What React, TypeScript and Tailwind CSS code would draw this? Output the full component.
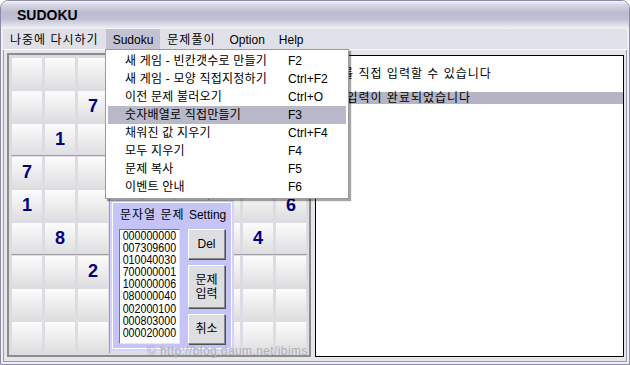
import React from 'react';

const givens: Record<string, string> = {
  '1-2': '7',
  '2-1': '1',
  '3-0': '7',
  '4-0': '1',
  '4-8': '6',
  '5-1': '8',
  '5-7': '4',
  '6-2': '2',
};

const menuBar = [
  { label: '나중에 다시하기', ko: true },
  { label: 'Sudoku', active: true },
  { label: '문제풀이', ko: true },
  { label: 'Option' },
  { label: 'Help' },
];

const sudokuMenu = [
  { label: '새 게임 - 빈칸갯수로 만들기', key: 'F2' },
  { label: '새 게임 - 모양 직접지정하기', key: 'Ctrl+F2' },
  { label: '이전 문제 불러오기', key: 'Ctrl+O' },
  { label: '숫자배열로 직접만들기', key: 'F3', active: true },
  { label: '채워진 값 지우기', key: 'Ctrl+F4' },
  { label: '모두 지우기', key: 'F4' },
  { label: '문제 복사', key: 'F5' },
  { label: '이벤트 안내', key: 'F6' },
];

const puzzleRows = [
  '000000000',
  '007309600',
  '010040030',
  '700000001',
  '100000006',
  '080000040',
  '002000100',
  '000803000',
  '000020000',
];

function Board() {
  return (
    <div className="w-[304px] h-[304px] shrink-0 border-2 border-[#8c8c8c] bg-[#dcdce2] p-[2px]">
      <div className="grid grid-cols-3 gap-px bg-[#9e9ea4]">
        {[0, 1, 2].flatMap((br) =>
          [0, 1, 2].map((bc) => (
            <div key={`b${br}${bc}`} className="grid grid-cols-3 gap-[3px] bg-[#dcdce2] p-px">
              {[0, 1, 2].flatMap((r) =>
                [0, 1, 2].map((c) => {
                  const row = br * 3 + r;
                  const col = bc * 3 + c;
                  const v = givens[`${row}-${col}`];
                  return (
                    <div
                      key={`c${row}${col}`}
                      className="w-[30px] h-[30px] flex items-center justify-center bg-linear-to-b from-[#fcfcfc] to-[#dfdfe1] text-[18px] leading-none font-bold text-[#000080]"
                    >
                      {v}
                    </div>
                  );
                })
              )}
            </div>
          ))
        )}
      </div>
    </div>
  );
}

function MessageList() {
  return (
    <div className="ml-[4px] mt-[2px] w-[309px] h-[302px] shrink-0 border border-black bg-white text-[12px] leading-[12px] tracking-[1px]">
      <div className="h-[12px]" />
      <div className="h-[12px] pl-[2px] whitespace-nowrap">문제를 직접 입력할 수 있습니다</div>
      <div className="h-[12px]" />
      <div className="h-[12px] pl-[2px] whitespace-nowrap bg-[#b4b4c4]">문제 입력이 완료되었습니다</div>
    </div>
  );
}

function SudokuMenu() {
  return (
    <div className="absolute left-[104px] top-[48px] w-[244px] h-[150px] border border-[#9a9a9a] bg-white p-[2px] shadow-[2px_2px_1px_rgba(0,0,0,0.35)] text-[12px]">
      {sudokuMenu.map((item) => (
        <div
          key={item.label}
          className={`h-[18px] flex items-center whitespace-nowrap ${item.active ? 'bg-[#b8b8c8]' : ''}`}
        >
          <span className="w-[180px] pl-[17px] tracking-[0.2px]">{item.label}</span>
          <span>{item.key}</span>
        </div>
      ))}
    </div>
  );
}

function SettingPanel() {
  const btn =
    'w-[37px] flex items-center justify-center bg-[#dedee0] border border-t-white border-l-white border-b-[#8a8a8a] border-r-[#8a8a8a] shadow-[1px_1px_0_#505050] text-[12px] leading-[14px] text-center';
  return (
    <div className="absolute left-[109px] top-[199px] w-[124px] h-[151px] bg-[#d2d2fa] p-[2px]">
      <div className="h-full border border-white bg-[#c4c4f8] px-[6px] pt-[6px]">
        <div className="h-[12px] pl-[1px] text-[12px] leading-[12px] whitespace-nowrap">
          <span className="tracking-[1px]">문자열 문제 </span>Setting
        </div>
        <div className="mt-[8px] flex">
          <div className="w-[64px] h-[115px] border border-t-[#7a7a7a] border-l-[#7a7a7a] border-b-[#e8e8e8] border-r-[#e8e8e8] bg-white overflow-hidden">
            <div className="pl-[3px] origin-left scale-x-[0.89] text-[12px] leading-[12.1px] font-['Liberation_Sans',sans-serif]">
              {puzzleRows.map((r, i) => (
                <div key={i}>{r}</div>
              ))}
            </div>
          </div>
          <div className="ml-[8px] flex flex-col gap-[6px]">
            <div className={`${btn} h-[30px]`}>Del</div>
            <div className={`${btn} h-[43px]`}>
              문제
              <br />
              입력
            </div>
            <div className={`${btn} h-[30px]`}>취소</div>
          </div>
        </div>
      </div>
    </div>
  );
}

export default function App() {
  return (
    <div className="w-[630px] h-[365px] bg-white text-[12px] text-black font-['Liberation_Sans','Noto_Sans_CJK_KR',sans-serif]">
      <div className="relative w-[630px] h-[365px] rounded-t-[8px] border border-[#8a8aa6] bg-[#f0f0f4] px-[2px] pb-[2px] flex flex-col overflow-hidden">
        {/* title bar */}
        <div className="-mx-[2px] h-[28px] shrink-0 pl-[16px] flex items-center bg-[linear-gradient(to_bottom,#f6f6fa_0%,#d6d6e4_14%,#babad0_42%,#c2c2d6_66%,#e4e4ec_90%,#f2f2f6_100%)] text-[14px] font-bold">
          SUDOKU
        </div>

        {/* menu bar */}
        <div className="h-[20px] shrink-0 flex bg-[#e0e0e8]">
          {menuBar.map((m) => (
            <div
              key={m.label}
              className={`px-[7px] pt-[2px] flex items-center whitespace-nowrap ${m.active ? 'bg-[#c2c2d2]' : ''} ${m.ko ? 'tracking-[1px]' : ''}`}
            >
              {m.label}
            </div>
          ))}
        </div>
        <div className="h-px shrink-0 bg-[#fafafc]" />

        {/* body */}
        <div className="flex-1 flex items-start border border-t-0 border-[#9a9ab0] bg-[#e5e5ea] pl-[3px] pt-[3px]">
          <Board />
          <MessageList />
        </div>

        <SettingPanel />
        <SudokuMenu />

        <div className="absolute left-[146px] top-[344px] text-[12px] leading-[12px] tracking-[0.4px] text-[#b0b0b6] whitespace-nowrap">
          © http://blog.daum.net/ibims
        </div>
      </div>
    </div>
  );
}
